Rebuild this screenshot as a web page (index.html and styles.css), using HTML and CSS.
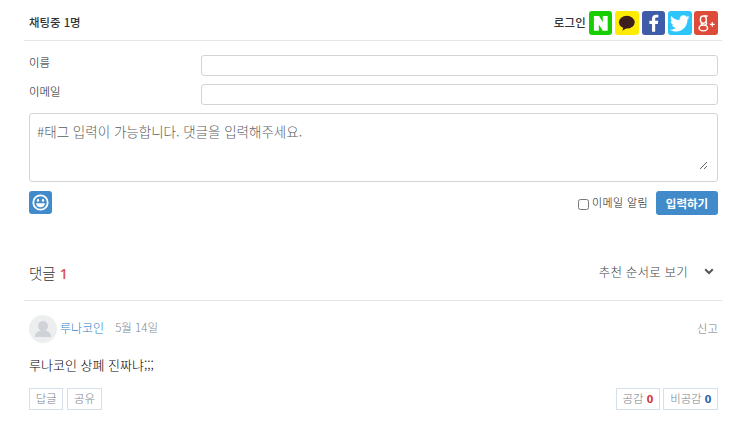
FILE: index.html
```html
<!DOCTYPE html>
<html lang="ko">
<head>
<meta charset="utf-8">
<title>댓글</title>
<link rel="stylesheet" href="styles.css">
</head>
<body>
<div class="wrap">
  <header class="topbar">
    <div class="chatting">채팅중 1명</div>
    <div class="login">
      <span class="login-label">로그인</span>
      <a class="sns sns-n"><svg viewBox="0 0 24 24"><path d="M5 5h5.200l3.800 6.200V5h5v15h-5l-4-6.400V20H5z" fill="#fff"/></svg></a>
      <a class="sns sns-k"><svg viewBox="0 0 24 24"><ellipse cx="12" cy="11.200" rx="8" ry="6.500" fill="#3c1e1e"/><path d="M8.500 16 7.500 20l4.500-3z" fill="#3c1e1e"/></svg></a>
      <a class="sns sns-f"><svg viewBox="0 0 24 24"><path d="M13.400 21v-8h2.700l.4-3.200h-3.100V7.900c0-.9.3-1.500 1.600-1.500h1.600V3.600c-.3 0-1.300-.1-2.400-.1-2.400 0-4 1.400-4 4.100v2.200H7.500V13h2.700v8z" fill="#fff"/></svg></a>
      <a class="sns sns-t"><svg viewBox="0 0 24 24"><path d="M22 6.200c-.7.3-1.500.6-2.400.7.900-.5 1.500-1.300 1.800-2.300-.8.500-1.700.8-2.600 1C18 4.700 17 4.200 15.800 4.200c-2.300 0-4.100 1.900-4.100 4.100 0 .3 0 .6.100.9C8.400 9.100 5.400 7.400 3.400 4.900 3 5.500 2.800 6.200 2.800 7c0 1.400.7 2.700 1.800 3.400-.7 0-1.300-.2-1.900-.5v.1c0 2 1.400 3.700 3.300 4-.6.200-1.200.2-1.900.1.500 1.600 2 2.800 3.800 2.900-1.700 1.300-3.900 2-6.100 1.800 1.800 1.200 4 1.800 6.300 1.800 7.500 0 11.700-6.300 11.700-11.700v-.5c.9-.6 1.600-1.400 2.200-2.200z" fill="#fff"/></svg></a>
      <a class="sns sns-g"><svg viewBox="0 0 24 24"><g fill="none" stroke="#fff" stroke-width="1.500"><ellipse cx="9.500" cy="8.500" rx="3" ry="3.700"/><ellipse cx="9.500" cy="17" rx="4.300" ry="3"/><path d="M8 12c-1 1-.6 1.600.9 2.400M10 4.800h4M12 11c1.300 1 .8 2.300-.6 3.300"/></g><path d="M18 11h1.200v1.800H21V14h-1.800v1.800H18V14h-1.800v-1.200H18z" fill="#fff"/></svg></a>
    </div>
  </header>

  <form class="form">
    <label class="field">
      <span class="field-label">이름</span>
      <input class="field-input" type="text">
    </label>
    <label class="field">
      <span class="field-label">이메일</span>
      <input class="field-input" type="text">
    </label>
    <div class="message-box">
      <textarea class="message" placeholder="#태그 입력이 가능합니다. 댓글을 입력해주세요."></textarea>
    </div>
    <div class="actions">
      <a class="emoji"><svg viewBox="0 0 23 23"><circle cx="11.500" cy="11.500" r="7.200" fill="none" stroke="#fff" stroke-width="1.800"/><ellipse cx="9" cy="9.300" rx="1.100" ry="1.600" fill="#fff"/><ellipse cx="14" cy="9.300" rx="1.100" ry="1.600" fill="#fff"/><path d="M7 12.300h9c-.2 2.600-2.100 4-4.500 4s-4.300-1.400-4.500-4z" fill="#fff"/></svg></a>
      <div class="submit-group">
        <label class="notify"><input class="notify-check" type="checkbox"><span>이메일 알림</span></label>
        <button class="submit" type="button">입력하기</button>
      </div>
    </div>
  </form>

  <section class="comments">
    <div class="comments-head">
      <h2 class="comments-title">댓글 <em>1</em></h2>
      <div class="sort">
        <span>추천 순서로 보기</span>
        <svg class="chev" viewBox="0 0 10 7"><path d="M1.200 1.300 5 5l3.800-3.700" fill="none" stroke="#555" stroke-width="2"/></svg>
      </div>
    </div>
    <article class="comment">
      <div class="comment-meta">
        <div class="author">
          <span class="avatar"><svg viewBox="0 0 28 28"><circle cx="14" cy="11" r="5" fill="#cfd3d7"/><path d="M6 22c0-4 3-6 5.500-6.500h5C19 16 22 18 22 22z" fill="#cfd3d7"/></svg></span>
          <a class="name">루나코인</a>
          <time class="date">5월 14일</time>
        </div>
        <a class="report">신고</a>
      </div>
      <p class="comment-text">루나코인 상폐 진짜냐;;;</p>
      <div class="comment-actions">
        <div class="chips">
          <a class="chip">답글</a>
          <a class="chip">공유</a>
        </div>
        <div class="chips chips-right">
          <a class="chip">공감 <b class="up">0</b></a>
          <a class="chip">비공감 <b class="down">0</b></a>
        </div>
      </div>
    </article>
  </section>
</div>
</body>
</html>
```

FILE: styles.css
```css
* {
  box-sizing: border-box;
}

html,
body {
  margin: 0;
  padding: 0;
  background: #fff;
}

body {
  font-family: "Noto Sans CJK KR", "Open Sans", "Noto Sans", sans-serif;
  font-size: 11px;
  color: #333;
  overflow: hidden;
}

.wrap {
  width: 698px;
  margin-left: 24px;
}

.topbar {
  height: 41px;
  padding: 11px 4px 0 5px;
  border-bottom: 1px solid #e5e5e5;
  display: flex;
  justify-content: space-between;
  align-items: flex-start;
}

.chatting {
  font-weight: 500;
  line-height: 22px;
  font-size: 11.400px;
}

.login {
  display: flex;
  align-items: flex-start;
  gap: 2.800px;
}

.login-label {
  font-size: 11.400px;
  line-height: 22px;
  font-weight: 500;
  letter-spacing: 0.300px;
}

.sns {
  width: 23.600px;
  height: 24px;
  border-radius: 3px;
  display: block;
}

.sns svg {
  display: block;
  width: 100%;
  height: 100%;
}

.sns-n { background: #19ce00; }
.sns-k { background: #ffeb00; }
.sns-f { background: #3f5ca8; }
.sns-t { background: #2dc6fb; }
.sns-g { background: #dd4b39; }

.form {
  padding: 14px 4px 0 5px;
}

.field {
  display: flex;
  align-items: flex-start;
  margin-bottom: 8px;
}

.field-label {
  width: 172px;
  font-size: 11.400px;
  font-weight: 300;
  line-height: 14px;
  color: #111;
}

.field-input {
  flex: 1;
  display: block;
  height: 21px;
  border: 1px solid #d4d4d4;
  border-radius: 3px;
  background: #fff;
  padding: 0 6px;
  outline: none;
}

.message-box {
  width: 689px;
  height: 69px;
  border: 1px solid #d4d4d4;
  border-radius: 3px;
  padding: 7px 9px 11px 7px;
}

.message {
  display: block;
  width: 100%;
  height: 100%;
  border: 0;
  padding: 0;
  margin: 0;
  font-family: inherit;
  font-size: 13.500px;
  font-weight: 300;
  line-height: 20px;
  color: #333;
  outline: none;
}

.message::placeholder {
  color: #5c5c5c;
  opacity: 1;
}

.actions {
  display: flex;
  justify-content: space-between;
  align-items: flex-start;
  margin-top: 9px;
}

.emoji {
  display: block;
  width: 23px;
  height: 23px;
  border-radius: 3px;
  background: #428bca;
}

.emoji svg {
  display: block;
  width: 100%;
  height: 100%;
}

.submit-group {
  display: flex;
  align-items: flex-start;
}

.notify {
  display: flex;
  align-items: flex-start;
  font-size: 11px;
  font-weight: 300;
  line-height: 22px;
  letter-spacing: 0.400px;
  color: #111;
  margin-right: 8px;
}

.notify-check {
  width: 11px;
  height: 11px;
  margin: 8px 3px 0 0;
}

.submit {
  width: 62px;
  height: 24px;
  padding: 0;
  border: 0;
  border-radius: 3px;
  background: #428bca;
  color: #fff;
  font-family: inherit;
  font-size: 11.500px;
  font-weight: 700;
  line-height: 22px;
}

.comments {
  margin-top: 33px;
}

.comments-head {
  height: 53px;
  padding: 0 8px 0 5px;
  border-bottom: 1px solid #e5e5e5;
  display: flex;
  justify-content: space-between;
  align-items: flex-start;
}

.comments-title {
  margin: 0;
  font-size: 14.500px;
  font-weight: 300;
  line-height: 49px;
  color: #333;
}

.comments-title em {
  font-style: normal;
  font-weight: 600;
  color: #d9534f;
  font-family: "Open Sans", sans-serif;
  font-size: 14px;
}

.sort {
  display: flex;
  align-items: center;
  height: 46px;
  font-size: 12.500px;
  font-weight: 300;
  color: #444;
  letter-spacing: 0.200px;
}

.chev {
  width: 10px;
  height: 7px;
  margin-left: 16px;
}

.comment {
  padding: 14px 4px 0 5px;
}

.comment-meta {
  display: flex;
  justify-content: space-between;
  align-items: center;
  height: 28px;
}

.author {
  display: flex;
  align-items: center;
}

.avatar {
  display: block;
  width: 28px;
  height: 28px;
  border-radius: 50%;
  background: #eceeef;
  margin-right: 3px;
}

.avatar svg {
  display: block;
  width: 100%;
  height: 100%;
}

.name {
  color: #2f7fc4;
  font-size: 12px;
  font-weight: 300;
  margin-bottom: 4px;
}

.date {
  color: #7c8894;
  font-size: 11.500px;
  font-weight: 300;
  margin-left: 11px;
  margin-bottom: 4px;
}

.report {
  color: #777;
  font-size: 11.500px;
  font-weight: 300;
  margin-bottom: 2px;
}

.comment-text {
  margin: 12px 0 0;
  font-size: 13px;
  font-weight: 300;
  line-height: 20px;
  color: #000;
}

.comment-actions {
  display: flex;
  justify-content: space-between;
  margin-top: 13px;
}

.chips {
  display: flex;
  gap: 4px;
}

.chips-right {
  gap: 3.500px;
}

.chip {
  display: block;
  height: 22px;
  padding: 0 5.700px;
  border: 1px solid #d5e0ea;
  font-size: 11.400px;
  font-weight: 300;
  line-height: 19px;
  color: #77818b;
}

.chip b {
  font-weight: 700;
  font-family: "Open Sans", sans-serif;
}

.up {
  color: #d9323a;
}

.down {
  color: #2a5ca8;
}
```
